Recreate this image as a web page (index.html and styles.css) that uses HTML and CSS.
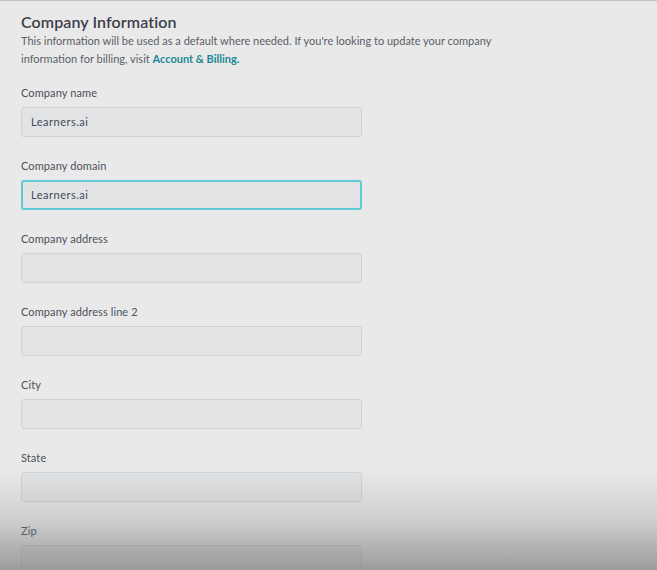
FILE: index.html
```html
<!DOCTYPE html>
<html lang="en">
<head>
<meta charset="utf-8">
<title>Company Information</title>
<link rel="stylesheet" href="styles.css">
</head>
<body>
<main class="page">
  <header class="intro">
    <h1 class="title">Company Information</h1>
    <p class="desc">This information will be used as a default where needed. If you're looking to update your company information for billing, visit <a class="link" href="#">Account &amp; Billing.</a></p>
  </header>
  <form class="form">
    <div class="field">
      <label class="label">Company name</label>
      <div class="input">Learners.ai</div>
    </div>
    <div class="field">
      <label class="label">Company domain</label>
      <div class="input focused">Learners.ai</div>
    </div>
    <div class="field">
      <label class="label">Company address</label>
      <div class="input"></div>
    </div>
    <div class="field">
      <label class="label">Company address line 2</label>
      <div class="input"></div>
    </div>
    <div class="field">
      <label class="label">City</label>
      <div class="input"></div>
    </div>
    <div class="field">
      <label class="label">State</label>
      <div class="input"></div>
    </div>
    <div class="field">
      <label class="label">Zip</label>
      <div class="input"></div>
    </div>
  </form>
</main>
<div class="shade"></div>
</body>
</html>
```

FILE: styles.css
```css
html, body {
  margin: 0;
  height: 100%;
  overflow: hidden;
}
body {
  background: #e9e9e9;
  border-top: 1px solid #c2c2c2;
  box-sizing: border-box;
  font-family: "Lato", "Open Sans", sans-serif;
  color: #454b55;
}
.page {
  padding: 11px 21px 0 21px;
  display: flex;
  flex-direction: column;
}
.title {
  margin: 0;
  font-size: 16px;
  line-height: 20px;
  font-weight: 600;
  color: #3b404a;
  letter-spacing: 0.1px;
}
.desc {
  margin: 0;
  width: 484px;
  font-size: 11px;
  line-height: 18px;
  color: #5a5f68;
}
.link {
  color: #1b8a97;
  font-weight: 700;
  text-decoration: none;
  line-height: 14px;
}
.form {
  margin-top: 17px;
  display: flex;
  flex-direction: column;
  gap: 21px;
}
.field {
  display: flex;
  flex-direction: column;
  gap: 7px;
}
.label {
  font-size: 11px;
  line-height: 15px;
  color: #4c515b;
  letter-spacing: 0.1px;
}
.input {
  width: 341px;
  height: 30px;
  box-sizing: border-box;
  background: #e2e3e5;
  border: 1px solid #cfd2d6;
  border-radius: 3px;
  padding: 0 9px;
  font-size: 11px;
  line-height: 28px;
  letter-spacing: 0.5px;
  color: #3d4b5c;
}
.input.focused {
  border: 2px solid #5fcbd5;
  padding: 0 8px;
  line-height: 26px;
}
.shade {
  position: fixed;
  left: 0;
  right: 0;
  bottom: 0;
  height: 100px;
  pointer-events: none;
  background: linear-gradient(to bottom, rgba(120,120,120,0) 0%, rgba(120,120,120,0.2) 45%, rgba(105,105,105,0.6) 100%);
}
```
